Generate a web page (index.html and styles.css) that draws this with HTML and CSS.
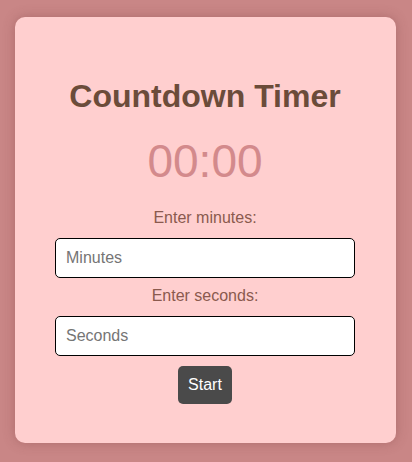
FILE: index.html
```html
<!DOCTYPE html>
<html lang="en">
<head>
<meta charset="utf-8">
<title>Countdown Timer</title>
<link rel="stylesheet" href="styles.css">
</head>
<body>
<div class="card">
  <h1 class="title">Countdown Timer</h1>
  <div class="time">00:00</div>
  <label class="label" for="min">Enter minutes:</label>
  <input class="field" id="min" type="number" placeholder="Minutes">
  <label class="label" for="sec">Enter seconds:</label>
  <input class="field" id="sec" type="number" placeholder="Seconds">
  <button class="start">Start</button>
</div>
</body>
</html>
```
FILE: styles.css
```css
html, body {
  margin: 0;
}
body {
  background: #c98686;
  font-family: "Liberation Sans", Arial, sans-serif;
  padding: 17px 0 0 15px;
  height: 462px;
  box-sizing: border-box;
}
.card {
  width: 381px;
  box-sizing: border-box;
  height: 426px;
  background: #ffcfcf;
  border-radius: 10px;
  box-shadow: 0 0 12px rgba(120, 60, 60, 0.35);
  padding: 40px 41px 0 40px;
  display: flex;
  flex-direction: column;
  align-items: center;
  text-align: center;
}
.title {
  font-size: 32px;
  font-weight: bold;
  color: #6b4c3a;
  margin: 21px 0 0;
  line-height: 37px;
}
.time {
  font-size: 46px;
  line-height: 53px;
  color: #d38a8c;
  margin-top: 20px;
}
.label {
  font-size: 16px;
  color: #8a5a4e;
  margin-top: 21px;
  line-height: 18px;
}
.field {
  width: 300px;
  height: 40px;
  box-sizing: border-box;
  border: 1px solid #000;
  border-radius: 5px;
  background: #fff;
  padding: 0 10px;
  font-size: 16px;
  font-family: "Liberation Sans", Arial, sans-serif;
  margin-top: 11px;
  -moz-appearance: textfield;
}
.field::-webkit-outer-spin-button,
.field::-webkit-inner-spin-button {
  -webkit-appearance: none;
  margin: 0;
}
.field::placeholder {
  color: #757575;
}
.field + .label {
  margin-top: 9px;
}
.start {
  margin-top: 10px;
  width: 54px;
  height: 38px;
  background: #4a4a4a;
  color: #fff;
  border: none;
  border-radius: 5px;
  font-size: 16px;
  font-family: "Liberation Sans", Arial, sans-serif;
  padding: 0;
}
```
